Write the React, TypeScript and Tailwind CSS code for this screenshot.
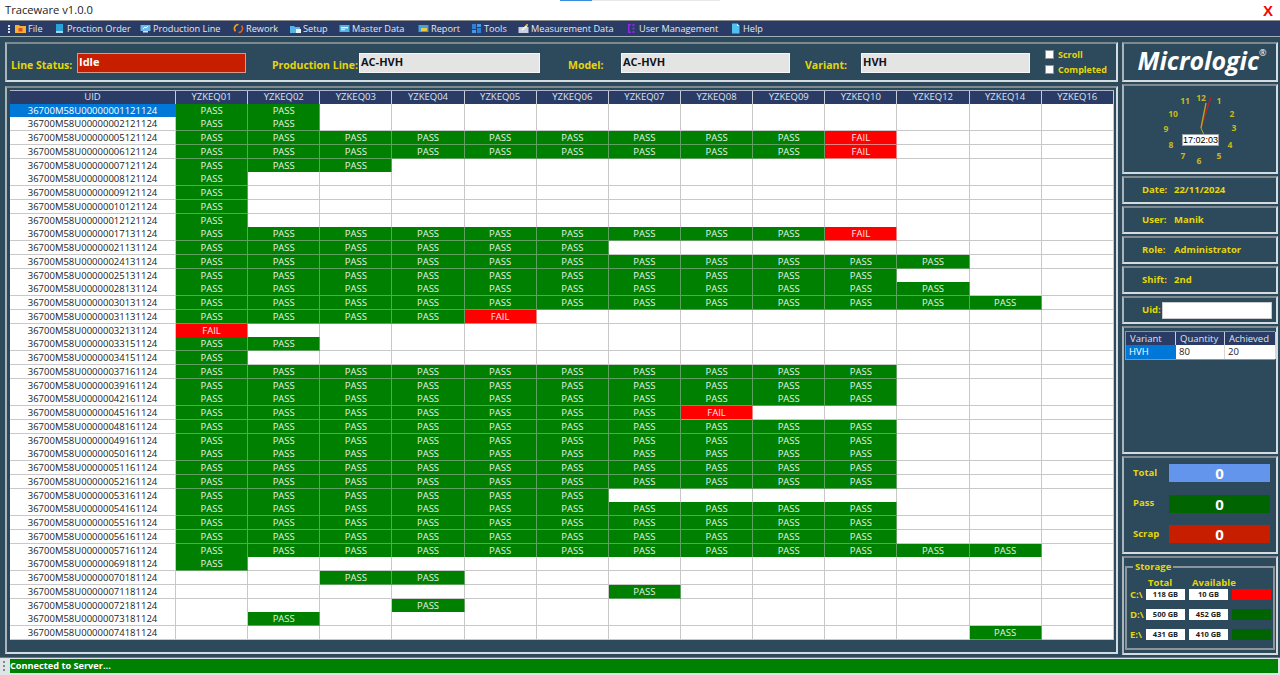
const EQ = ["01", "02", "03", "04", "05", "06", "07", "08", "09", "10", "12", "14", "16"];

// P = pass, F = fail, . = empty, columns follow EQ
const ROWS: [string, string][] = [
  ["00000001121124", "PP"],
  ["00000002121124", "PP"],
  ["00000005121124", "PPPPPPPPPF"],
  ["00000006121124", "PPPPPPPPPF"],
  ["00000007121124", "PPP"],
  ["00000008121124", "P"],
  ["00000009121124", "P"],
  ["00000010121124", "P"],
  ["00000012121124", "P"],
  ["00000017131124", "PPPPPPPPPF"],
  ["00000021131124", "PPPPPP"],
  ["00000024131124", "PPPPPPPPPPP"],
  ["00000025131124", "PPPPPPPPPP"],
  ["00000028131124", "PPPPPPPPPPP"],
  ["00000030131124", "PPPPPPPPPPPP"],
  ["00000031131124", "PPPPF"],
  ["00000032131124", "F"],
  ["00000033151124", "PP"],
  ["00000034151124", "P"],
  ["00000037161124", "PPPPPPPPPP"],
  ["00000039161124", "PPPPPPPPPP"],
  ["00000042161124", "PPPPPPPPPP"],
  ["00000045161124", "PPPPPPPF"],
  ["00000048161124", "PPPPPPPPPP"],
  ["00000049161124", "PPPPPPPPPP"],
  ["00000050161124", "PPPPPPPPPP"],
  ["00000051161124", "PPPPPPPPPP"],
  ["00000052161124", "PPPPPPPPPP"],
  ["00000053161124", "PPPPPP"],
  ["00000054161124", "PPPPPPPPPP"],
  ["00000055161124", "PPPPPPPPPP"],
  ["00000056161124", "PPPPPPPPPP"],
  ["00000057161124", "PPPPPPPPPPPP"],
  ["00000069181124", "P"],
  ["00000070181124", "..PP"],
  ["00000071181124", "......P"],
  ["00000072181124", "...P"],
  ["00000073181124", ".P"],
  ["00000074181124", "...........P"],
];

const groove = "border-2 border-t-[#7f8a90] border-l-[#aab4b9] border-b-[#d5dcdf] border-r-[#d5dcdf]";
const yellow = "text-[#e6d60a]";

function MenuIcon({ name }: { name: string }) {
  const box = "w-[11px] h-[11px] shrink-0";
  switch (name) {
    case "file":
      return (
        <svg viewBox="0 0 11 11" className={box}>
          <path d="M0 2h4l1 1h6v7H0z" fill="#f2b233" />
          <rect x="3.5" y="5" width="4" height="3.5" fill="#e2482c" />
        </svg>
      );
    case "order":
      return (
        <svg viewBox="0 0 11 11" className={box}>
          <rect x="2" y="1" width="7" height="8" fill="#2aa2d8" />
          <rect x="2" y="8" width="7" height="2" fill="#9fd6ef" />
        </svg>
      );
    case "line":
      return (
        <svg viewBox="0 0 11 11" className={box}>
          <rect x="0.5" y="2" width="10" height="6" fill="#6fb6ea" />
          <path d="M3 6l2-2 1 1 2-2" stroke="#fff" fill="none" />
          <rect x="3" y="8" width="5" height="1.5" fill="#cfe6f7" />
        </svg>
      );
    case "rework":
      return (
        <svg viewBox="0 0 11 11" className={box}>
          <path d="M5.5 1.5a4 4 0 0 0-3 6.7" stroke="#f0a020" strokeWidth="1.6" fill="none" />
          <path d="M5.5 9.5a4 4 0 0 0 3-6.7" stroke="#d9641c" strokeWidth="1.6" fill="none" />
        </svg>
      );
    case "setup":
      return (
        <svg viewBox="0 0 11 11" className={box}>
          <path d="M0 3h4l1 1h5v6H0z" fill="#58b4e8" />
          <rect x="6" y="6" width="5" height="4" fill="#e8f3fa" />
        </svg>
      );
    case "master":
      return (
        <svg viewBox="0 0 11 11" className={box}>
          <rect x="0.5" y="2" width="10" height="7" fill="#52b2e6" />
          <rect x="2" y="4" width="7" height="1.4" fill="#e6f4fc" />
          <rect x="2" y="6.2" width="4" height="1" fill="#e6f4fc" />
        </svg>
      );
    case "report":
      return (
        <svg viewBox="0 0 11 11" className={box}>
          <rect x="0.5" y="2" width="10" height="7" fill="#3fa4dc" />
          <rect x="3" y="5" width="6" height="3" fill="#f0c83c" />
        </svg>
      );
    case "tools":
      return (
        <svg viewBox="0 0 11 11" className={box}>
          <rect x="1" y="1" width="4" height="5" fill="#2f7fd8" />
          <rect x="6" y="1" width="4" height="3" fill="#3f9be8" />
          <rect x="1" y="7" width="4" height="3" fill="#3f9be8" />
          <rect x="6" y="5" width="4" height="5" fill="#2f7fd8" />
        </svg>
      );
    case "measure":
      return (
        <svg viewBox="0 0 11 11" className={box}>
          <rect x="0.5" y="4" width="10" height="6" fill="#c9d2da" />
          <path d="M3 7l5-5 1.5 1.500-5 4z" fill="#f2f2f2" />
          <rect x="8" y="1" width="2" height="2" fill="#e0a030" />
        </svg>
      );
    case "user":
      return (
        <svg viewBox="0 0 11 11" className={box}>
          <path d="M2 1h3v1.5H3.500v6H5V10H2z" fill="#8a2be2" />
          <rect x="6.500" y="1" width="2" height="2" fill="#8a2be2" />
          <rect x="6.500" y="4.500" width="2" height="2" fill="#8a2be2" />
          <rect x="6.500" y="8" width="2" height="2" fill="#8a2be2" />
        </svg>
      );
    default:
      return (
        <svg viewBox="0 0 11 11" className={box}>
          <path d="M2 0.500h5l2.500 2.500v7.500H2z" fill="#4fc0f0" />
          <path d="M7 0.500v2.500h2.500z" fill="#d8f1fc" />
        </svg>
      );
  }
}

const MENU: [string, string, string][] = [
  ["file", "File", "w-[39px]"],
  ["order", "Proction Order", "w-[86px]"],
  ["line", "Production Line", "w-[93px]"],
  ["rework", "Rework", "w-[57px]"],
  ["setup", "Setup", "w-[49px]"],
  ["master", "Master Data", "w-[79px]"],
  ["report", "Report", "w-[53px]"],
  ["tools", "Tools", "w-[47px]"],
  ["measure", "Measurement Data", "w-[108px]"],
  ["user", "User Management", "w-[104px]"],
  ["help", "Help", "w-[40px]"],
];

function MenuBar() {
  return (
    <div className="h-[17px] shrink-0 flex items-center bg-[#2a3b66] border-t border-t-[#8c8c8c] border-b border-b-[#9fb0b8] pl-[8px] pt-[1px] text-[9.2px] text-[#e4e8ee]">
      <span className="w-[7px] h-[8px] border-l-2 border-dotted border-[#dfe4ea]" />
      {MENU.map(([icon, label, w]) => (
        <div key={label} className={`flex items-center gap-[2px] whitespace-nowrap ${w}`}>
          <MenuIcon name={icon} />
          <span>{label}</span>
        </div>
      ))}
    </div>
  );
}

function Field({ value, red }: { value: string; red?: boolean }) {
  return (
    <div
      className={`h-[20px] mt-[1px] border pl-[1px] font-bold text-[11px] leading-[16px] ${
        red ? "w-[169px] bg-[#c81e00] border-[#d49a90] text-white" : "bg-[#e4e4e4] border-[#f6f6f6] text-[#10141c]"
      }`}
    >
      {value}
    </div>
  );
}

function Header() {
  const label = `font-bold text-[10.5px] whitespace-nowrap pt-[7px] ${yellow}`;
  const checkbox = "w-[9px] h-[9px] bg-white border border-[#8a949a]";
  return (
    <div className={`h-[40px] ${groove} flex items-center pl-[4px]`}>
      <span className={`${label} w-[66px]`}>Line Status:</span>
      <Field value="Idle" red />
      <span className={`${label} ml-[26px] w-[87px]`}>Production Line:</span>
      <div className="w-[181px]">
        <Field value="AC-HVH" />
      </div>
      <span className={`${label} ml-[28px] w-[53px]`}>Model:</span>
      <div className="w-[169px]">
        <Field value="AC-HVH" />
      </div>
      <span className={`${label} ml-[15px] w-[56px]`}>Variant:</span>
      <div className="w-[169px]">
        <Field value="HVH" />
      </div>
      <div className={`ml-[15px] flex flex-col gap-[6.5px] font-bold text-[9px] leading-[9px] ${yellow}`}>
        <div className="flex items-center gap-[4px]">
          <span className={checkbox} />
          Scroll
        </div>
        <div className="flex items-center gap-[4px]">
          <span className={checkbox} />
          Completed
        </div>
      </div>
    </div>
  );
}

function Cell({ v }: { v: string }) {
  if (v === "P")
    return <div className="bg-[#008000] text-[#e6f2e6] text-center border-r border-b border-[#5f9f5f]">PASS</div>;
  if (v === "F")
    return <div className="bg-[#ff0000] text-[#ffe6e6] text-center border-r border-b border-[#e88080]">FAIL</div>;
  return <div className="bg-white border-r border-b border-[#c8c8c8]" />;
}

function LineTable() {
  const cols = "grid grid-cols-[166px_repeat(13,72.15px)]";
  return (
    <div className="w-[1104px] text-[9.5px]">
      <div className={`${cols} h-[13.5px] bg-[#2a3b66] text-[#dfe4ee] leading-[12.5px] border-t border-t-[#aeb8c8]`}>
        <div className="text-center border-r border-[#c8ccd4]">UID</div>
        {EQ.map((e) => (
          <div key={e} className="text-center border-r border-[#c8ccd4]">
            YZKEQ{e}
          </div>
        ))}
      </div>
      {ROWS.map(([uid, cells], i) => (
        <div key={uid} className={`${cols} h-[13.75px] leading-[13px]`}>
          <div
            className={`text-center border-r border-b ${
              i === 0 ? "bg-[#0078d7] text-white border-[#0078d7]" : "bg-white text-[#222] border-[#c8c8c8]"
            }`}
          >
            36700M58U{uid}
          </div>
          {EQ.map((e, j) => (
            <Cell key={e} v={cells[j] ?? "."} />
          ))}
        </div>
      ))}
    </div>
  );
}

function Clock() {
  const nums: [string, number, number][] = [
    ["12", 77, 15],
    ["1", 95, 18],
    ["2", 108, 31],
    ["3", 110, 45],
    ["4", 106, 62],
    ["5", 95, 73],
    ["6", 75, 78],
    ["7", 59, 73],
    ["8", 47, 62],
    ["9", 42, 46],
    ["10", 49, 31],
    ["11", 61, 18],
  ];
  return (
    <div className={`relative h-[90px] ${groove}`}>
      <svg viewBox="0 0 152 86" className="w-[152px] h-[86px]">
        {nums.map(([n, x, y]) => (
          <text key={n} x={x} y={y} fill="#c9b81a" fontSize="8.5" fontWeight="700" textAnchor="middle" fontFamily="'Open Sans', sans-serif">
            {n}
          </text>
        ))}
        <line x1="77" y1="42" x2="87" y2="11" stroke="#c02020" strokeWidth="1.2" />
        <line x1="77" y1="42" x2="82" y2="17" stroke="#b8a820" strokeWidth="1.3" />
        <line x1="77" y1="42" x2="80" y2="49" stroke="#b8a820" strokeWidth="1" />
      </svg>
      <div className="absolute left-[58px] top-[48px] w-[37px] h-[12px] bg-white border border-[#9aa4aa] text-[9px] leading-[10px] text-center text-black font-['Liberation_Sans',sans-serif]">
        17:02:03
      </div>
    </div>
  );
}

function InfoPanel({ label, value }: { label: string; value: string }) {
  return (
    <div className={`h-[28px] ${groove} flex items-center pl-[18px] pt-[1px] font-bold text-[9.5px] ${yellow}`}>
      <span className="w-[32px]">{label}</span>
      <span>{value}</span>
    </div>
  );
}

function Variants() {
  const head = "bg-[#2a3b66] text-[#dfe4ee] pl-[4px] border-r border-[#c8ccd4] leading-[13px]";
  const cell = "bg-white text-[#222] pl-[3px] border-r border-[#d8d8d8] leading-[14px]";
  return (
    <div className={`h-[128px] ${groove} p-[1px] pt-[3px]`}>
      <div className="grid grid-cols-[50px_49px_51px] text-[9.5px] border border-[#8a949a]">
        <div className={head}>Variant</div>
        <div className={head}>Quantity</div>
        <div className={head}>Achieved</div>
        <div className="bg-[#0078d7] text-white pl-[3px] leading-[14px]">HVH</div>
        <div className={cell}>80</div>
        <div className={cell}>20</div>
      </div>
    </div>
  );
}

function Counter({ label, bg }: { label: string; bg: string }) {
  return (
    <div className="flex items-center h-[18px]">
      <span className={`w-[36px] font-bold text-[9.5px] ${yellow}`}>{label}</span>
      <div className={`w-[101px] h-[18px] text-center text-white font-bold text-[15px] leading-[18px] ${bg}`}>0</div>
    </div>
  );
}

function Totals() {
  return (
    <div className={`h-[98px] ${groove} flex flex-col gap-[12.5px] pl-[9px] pt-[6px]`}>
      <Counter label="Total" bg="bg-[#6495ed]" />
      <Counter label="Pass" bg="bg-[#006400]" />
      <Counter label="Scrap" bg="bg-[#c81e00]" />
    </div>
  );
}

function Storage() {
  const drives: [string, string, string, string][] = [
    ["C:\\", "118 GB", "10 GB", "bg-[#ff0000]"],
    ["D:\\", "500 GB", "452 GB", "bg-[#006400]"],
    ["E:\\", "431 GB", "410 GB", "bg-[#006400]"],
  ];
  const box = "w-[39px] h-[11px] bg-white text-[#222] text-center font-bold text-[7.5px] leading-[11px]";
  return (
    <div className={`h-[99px] ${groove} px-[1px] pt-[4px]`}>
      <fieldset className="h-[88px] border-2 border-[#8a969c] pl-[3px]">
        <legend className={`ml-[3px] px-[2px] font-bold text-[9.5px] leading-[10px] ${yellow}`}>Storage</legend>
        <div className={`flex mt-[5px] font-bold text-[9.5px] leading-[12px] pl-[16px] ${yellow}`}>
          <span className="w-[46px] pl-[2px]">Total</span>
          <span>Available</span>
        </div>
        <div className="flex flex-col gap-[9px]">
          {drives.map(([d, t, a, c]) => (
            <div key={d} className="flex items-center gap-[4px]">
              <span className={`w-[12px] font-bold text-[9.5px] leading-[11px] ${yellow}`}>{d}</span>
              <span className={box}>{t}</span>
              <span className={box}>{a}</span>
              <span className={`w-[39px] h-[11px] ${c}`} />
            </div>
          ))}
        </div>
      </fieldset>
    </div>
  );
}

export default function App() {
  return (
    <div className="relative w-[1280px] h-[675px] overflow-hidden flex flex-col bg-white font-['Open_Sans','Noto_Sans',sans-serif]">
      <div className="absolute left-[560px] top-0 w-[160px] h-[1px] bg-[#e8e8e8]">
        <div className="w-[32px] h-[1px] bg-[#3a8ee0]" />
      </div>

      <div className="h-[20px] shrink-0 flex items-center justify-between pl-[5px] pr-[7px]">
        <span className="text-[11.2px] text-[#222]">Traceware v1.0.0</span>
        <span className="text-[15px] font-bold text-[#ff0000] leading-none font-['Liberation_Sans',sans-serif]">X</span>
      </div>

      <MenuBar />

      <div className="flex-1 min-h-0 bg-[#2c4a5b] flex gap-[4px] pl-[5px] pt-[5px]">
        <div className="w-[1113px] flex flex-col gap-[4px]">
          <Header />
          <div className={`h-[568px] ${groove} pl-[3px] pt-[2px]`}>
            <LineTable />
          </div>
        </div>

        <div className="w-[156px] flex flex-col gap-[2px]">
          <div className={`h-[40px] ${groove} flex items-start justify-center pl-[4px] text-white italic font-bold text-[25px] leading-[33px]`}>
            Micrologic<span className="not-italic font-normal text-[9px] leading-[18px]">®</span>
          </div>
          <Clock />
          <InfoPanel label="Date:" value="22/11/2024" />
          <InfoPanel label="User:" value="Manik" />
          <InfoPanel label="Role:" value="Administrator" />
          <InfoPanel label="Shift:" value="2nd" />
          <div className={`h-[28px] ${groove} flex items-center pl-[18px] font-bold text-[9.5px] ${yellow}`}>
            <span className="w-[20px]">Uid:</span>
            <div className="w-[110px] h-[17px] bg-white border border-[#c8ccd0]" />
          </div>
          <Variants />
          <Totals />
          <Storage />
        </div>
      </div>

      <div className="h-[18px] shrink-0 bg-[#dfe4e7] border-t border-t-[#6f7a80] flex items-stretch pl-[3px] pr-[2px] pb-[2px] pt-[1px]">
        <span className="w-[3px] mr-[4px] my-[2px] border-l-2 border-dotted border-[#7d8a90]" />
        <div className="flex-1 bg-[#008000] text-white font-bold text-[9.2px] leading-[13px]">Connected to Server...</div>
      </div>
    </div>
  );
}
